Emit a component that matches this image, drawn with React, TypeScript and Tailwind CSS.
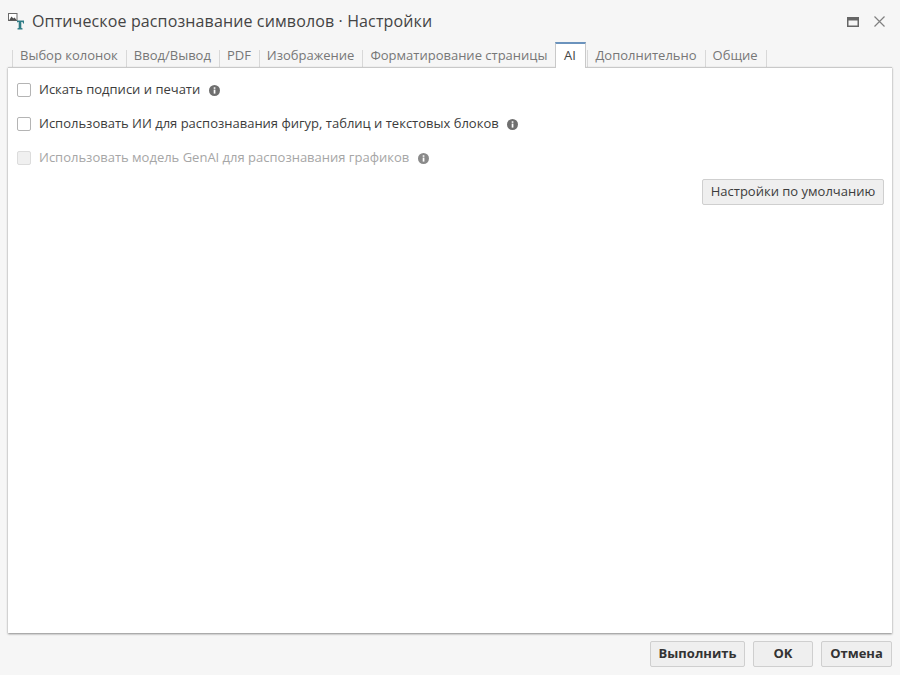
const tabs = [
  "Выбор колонок",
  "Ввод/Вывод",
  "PDF",
  "Изображение",
  "Форматирование страницы",
  "AI",
  "Дополнительно",
  "Общие",
];

function InfoIcon({ muted }: { muted?: boolean }) {
  return (
    <svg width="11" height="11" viewBox="0 0 11 11" className="ml-[8.5px] shrink-0">
      <circle cx="5.5" cy="5.5" r="5.5" fill={muted ? "#8a8a8a" : "#6f6f6f"} />
      <rect x="4.7" y="4.6" width="1.7" height="4" fill="#fff" />
      <rect x="4.7" y="2.3" width="1.7" height="1.5" fill="#fff" />
    </svg>
  );
}

function Option({ label, disabled }: { label: string; disabled?: boolean }) {
  return (
    <div className="flex h-[34px] items-center">
      <span
        className={
          disabled
            ? "h-[14px] w-[14px] shrink-0 rounded-[2px] border border-[#dcdcdc] bg-[#f0f0f0]"
            : "h-[14px] w-[14px] shrink-0 rounded-[2px] border border-[#b4b4b4] bg-white"
        }
      />
      <span className={disabled ? "ml-2 text-[#a6a6a6]" : "ml-2 text-[#3c3c3c]"}>{label}</span>
      <InfoIcon muted={disabled} />
    </div>
  );
}

function FooterButton({ label, width }: { label: string; width: string }) {
  return (
    <button
      className={`h-[26px] ${width} rounded-[2px] border border-[#cfcfcf] bg-[#efefef] text-[13px] font-bold text-[#333]`}
    >
      {label}
    </button>
  );
}

export default function App() {
  return (
    <div className="flex h-[675px] w-[900px] flex-col bg-[#f6f6f6] font-['Open_Sans',sans-serif] text-[13px]">
      <div className="flex h-[42px] shrink-0 items-center pl-[8px] pr-[15px]">
        <svg width="18" height="18" viewBox="0 0 18 18" className="shrink-0">
          <rect x="0.5" y="1.5" width="8.5" height="7" fill="#fff" stroke="#6a6a6a" />
          <path d="M1 8.5l2.5-4 1.8 2 1.2-1L9 8.5z" fill="#4f4f4f" />
          <path d="M9 8.5h7v3h-.9l-.6-1.4h-1.2V16l1.2.3V17.5H9.5v-1.2l1.2-.3V10.1H9.5l-.6 1.4H9z" fill="#2f7c86" />
        </svg>
        <span className="ml-[6px] text-[16px] tracking-[0.13px] text-[#444]">
          Оптическое распознавание символов · Настройки
        </span>
        <svg width="12" height="10" viewBox="0 0 12 10" className="ml-auto mt-[1px]">
          <rect x="0.75" y="0.75" width="10.5" height="8.5" fill="none" stroke="#666" strokeWidth="1.5" />
          <rect x="1" y="1" width="10" height="2.5" fill="#666" />
        </svg>
        <svg width="11" height="11" viewBox="0 0 11 11" className="ml-[15px] mt-[1px]">
          <path d="M0.5 0.5l10 10M10.5 0.5l-10 10" stroke="#808080" strokeWidth="1.2" fill="none" />
        </svg>
      </div>
      <div className="flex h-[25px] shrink-0 items-end pl-[12px]">
        {tabs.map((tab) =>
          tab === "AI" ? (
            <div
              key={tab}
              className="relative z-10 -mb-px mr-px flex h-[26px] w-[31px] shrink-0 items-center justify-center border-x border-t-2 border-x-[#c9c9c9] border-t-[#6b93bd] bg-white pr-[2px] text-[#444]"
            >
              {tab}
            </div>
          ) : (
            <div
              key={tab}
              className="h-[17px] border-l border-[#d8d8d8] pl-[7px] pr-[8px] leading-[10px] text-[#777] last:border-r"
            >
              {tab}
            </div>
          ),
        )}
      </div>
      <div className="mx-[8px] flex flex-1 flex-col border-t border-[#c9c9c9] bg-white pl-[9px] pr-[8px] pt-[5px] shadow-[0_1px_2px_rgba(0,0,0,0.45)]">
        <Option label="Искать подписи и печати" />
        <Option label="Использовать ИИ для распознавания фигур, таблиц и текстовых блоков" />
        <Option label="Использовать модель GenAI для распознавания графиков" disabled />
        <div className="mt-[4px] flex justify-end">
          <button className="h-[26px] w-[182px] rounded-[2px] border border-[#cfcfcf] bg-[#efefef] text-[#3c3c3c]">
            Настройки по умолчанию
          </button>
        </div>
      </div>
      <div className="flex h-[42px] shrink-0 items-center justify-end gap-[8px] pr-[8px]">
        <FooterButton label="Выполнить" width="w-[95px]" />
        <FooterButton label="OK" width="w-[60px]" />
        <FooterButton label="Отмена" width="w-[71px]" />
      </div>
    </div>
  );
}
